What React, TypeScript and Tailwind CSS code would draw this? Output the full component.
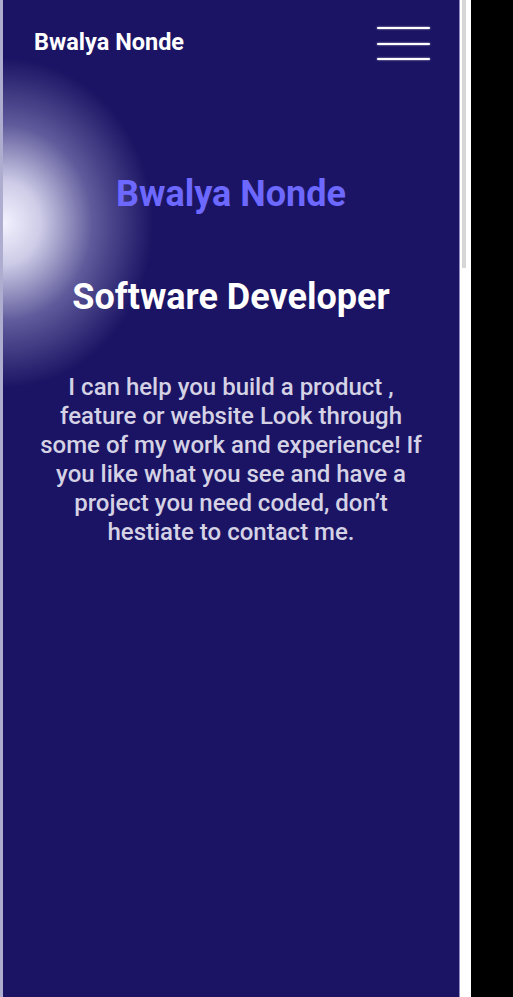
import React from 'react';

export default function App() {
  return (
    <div className="flex w-[513px] h-[997px] bg-black font-['Roboto',sans-serif]">
      <div className="relative flex w-[460px] h-full flex-col overflow-hidden border-l-[3px] border-r border-l-[#aeadd0] border-r-[#8f8cc4] bg-[#1b1464]">
        {/* glow on the left edge */}
        <div className="pointer-events-none absolute -left-[150px] top-[58px] h-[330px] w-[300px] rounded-full bg-[radial-gradient(closest-side,rgba(242,242,255,1)_0%,rgba(225,224,245,0.9)_25%,rgba(150,148,200,0.55)_60%,rgba(27,20,100,0)_100%)]" />

        <header className="relative flex items-center justify-between pl-[31px] pr-[29px] pt-[23px]">
          <span className="text-[23.5px] font-bold leading-[32px] text-white">Bwalya Nonde</span>
          <button className="flex w-[53px] flex-col gap-[13.5px] pt-[4px]">
            <span className="h-[2px] w-full rounded-full bg-white shadow-[0_0_2px_rgba(255,255,255,0.8)]" />
            <span className="h-[2px] w-full rounded-full bg-white shadow-[0_0_2px_rgba(255,255,255,0.8)]" />
            <span className="h-[2px] w-full rounded-full bg-white shadow-[0_0_2px_rgba(255,255,255,0.8)]" />
          </button>
        </header>

        <main className="relative flex flex-col items-center px-[32px] pt-[113px] text-center">
          <h1 className="text-[36px] font-bold leading-[42px] text-[#6d68ff]">Bwalya Nonde</h1>
          <h2 className="mt-[60px] text-[36px] font-bold leading-[44px] text-white">Software Developer</h2>
          <p className="mt-[54px] text-[24px] font-medium leading-[29px] text-[#d4d2e4]">
            I can help you build a product , feature or website Look through some of my work and experience! If you like what you see and have a project you need coded, don’t hestiate to contact me.
          </p>
        </main>
      </div>
      <div className="relative h-full w-[11px] bg-white">
        <div className="absolute left-[2px] top-0 h-[268px] w-[4px] bg-[#d6d6d6]" />
      </div>
    </div>
  );
}
